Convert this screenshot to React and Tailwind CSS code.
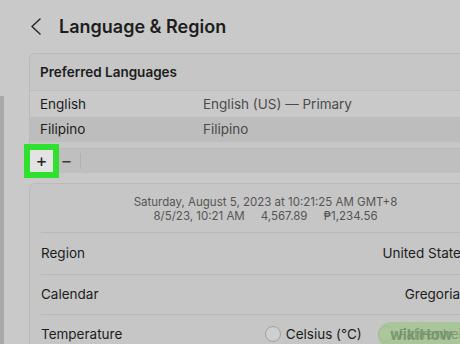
const font = { fontFamily: "Inter, 'Noto Sans', sans-serif" };

const SettingRow = ({ label, children, last, tall }) => (
  <div
    className={`mx-[11px] flex items-center justify-between ${
      last ? "h-[40px] pb-[2px]" : tall ? "h-[42px] border-b border-[#b9b9b9]" : "h-[40px] border-b border-[#b9b9b9]"
    }`}
  >
    <span className="text-[13.5px] text-[#1c1c1c]">{label}</span>
    <div className="flex items-center pr-[22px] text-[13.5px] text-[#1c1c1c]">{children}</div>
  </div>
);

const Radio = ({ label }) => (
  <label className="flex items-center gap-[5px]">
    <span className="h-[16px] w-[16px] rounded-full border border-[#a2a2a2] bg-[#cfcfcf]" />
    <span>{label}</span>
  </label>
);

export default function App() {
  return (
    <div
      style={font}
      className="relative flex h-[344px] w-[460px] overflow-hidden bg-[#c9c9c9] antialiased"
    >
      {/* sidebar edge */}
      <div className="flex w-[9px] flex-col">
        <div className="h-[96px]" />
        <div className="w-[4px] flex-1 bg-[#a8a8a8]" />
      </div>

      <div className="flex min-w-0 flex-1 flex-col pl-[20px]">
        {/* header */}
        <div className="flex h-[53px] shrink-0 items-center pb-[1px]">
          <svg width="12" height="17" viewBox="0 0 12 17" className="ml-[1px]">
            <path d="M10 1 L2 8.5 L10 16" fill="none" stroke="#2a2a2a" strokeWidth="1.5" strokeLinecap="round" strokeLinejoin="round" />
          </svg>
          <h1 className="ml-[17px] text-[18px] font-semibold tracking-[0px] text-[#1d1d1d]">
            Language &amp; Region
          </h1>
        </div>

        {/* preferred languages */}
        <div className="w-[480px] shrink-0 rounded-tl-[6px] border-l border-t border-[#bababa] bg-[#c6c6c6]">
          <div className="flex h-[37px] items-center border-b border-[#bcbcbc] pl-[10px] text-[13.5px] font-semibold text-[#1c1c1c]">
            Preferred Languages
          </div>
          <div className="flex h-[26px] items-center bg-[#c9c9c9] text-[13.5px] text-[#1c1c1c]">
            <span className="w-[173px] pl-[10px]">English</span>
            <span className="text-[#4b4b4b]">English (US) — Primary</span>
          </div>
          <div className="flex h-[25px] items-center bg-[#bdbdbd] text-[13.5px] text-[#1c1c1c]">
            <span className="w-[173px] pl-[10px]">Filipino</span>
            <span className="text-[#4b4b4b]">Filipino</span>
          </div>
          <div className="h-[7px] border-b border-[#b8b8b8]" />
          <div className="flex h-[24px] items-center bg-[#bfbfbf]">
            <button className="flex h-[22px] w-[23px] items-center justify-center bg-[#e3e3e3] text-[18px] leading-none text-[#222] outline-[6px] outline-[#2fe02f]">
              +
            </button>
            <button className="flex h-[22px] w-[27px] items-center justify-center text-[18px] leading-none text-[#3a3a3a]">
              −
            </button>
            <div className="h-[16px] w-px bg-[#b1b1b1]" />
          </div>
        </div>

        {/* region settings */}
        <div className="mt-[10px] w-[472px] flex-1 rounded-tl-[6px] border-l border-t border-[#bababa] bg-[#c6c6c6]">
          <div className="mx-[11px] flex h-[49px] flex-col items-center justify-center border-b border-[#b9b9b9] pt-[2px] text-[11.5px] leading-[14px] text-[#555]">
            <span>Saturday, August 5, 2023 at 10:21:25 AM GMT+8</span>
            <span className="flex gap-[16px]">
              <span>8/5/23, 10:21 AM</span>
              <span>4,567.89</span>
              <span>₱1,234.56</span>
            </span>
          </div>
          <SettingRow label="Region" tall>United States</SettingRow>
          <SettingRow label="Calendar">Gregorian</SettingRow>
          <SettingRow label="Temperature" last>
            <div className="mr-[-26px] flex items-center gap-[16px]">
              <Radio label="Celsius (°C)" />
              <Radio label="Fahrenheit (°F)" />
            </div>
          </SettingRow>
        </div>
      </div>

      {/* watermark */}
      <div className="absolute bottom-[-4px] right-[-12px] flex h-[26px] w-[94px] items-center rounded-l-full bg-[#9fc48a]/75 pl-[12px] text-[15px] font-bold text-[#6f8d6a]/80">
        wikiHow
      </div>
    </div>
  );
}
